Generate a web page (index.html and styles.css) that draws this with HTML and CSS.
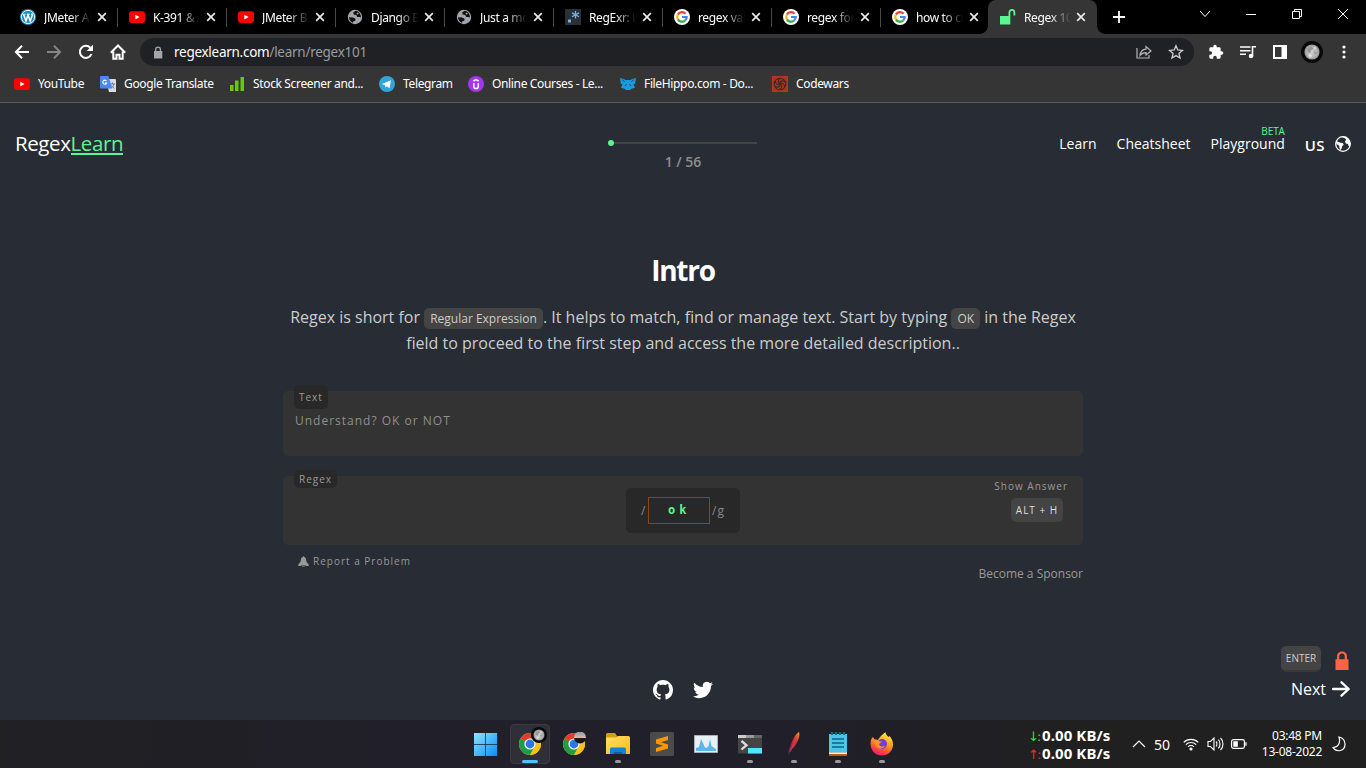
FILE: index.html
```html
<!DOCTYPE html>
<html lang="en">
<head>
<meta charset="utf-8">
<title>Regex 101 - RegexLearn</title>
<link rel="stylesheet" href="styles.css">
</head>
<body>
<svg class="defs" width="0" height="0" aria-hidden="true">
  <defs>
    <linearGradient id="win" x1="0" y1="0" x2="1" y2="1"><stop offset="0" stop-color="#8be6ff"/><stop offset="1" stop-color="#0a8cf5"/></linearGradient>
    <linearGradient id="folder" x1="0" y1="0" x2="1" y2="1"><stop offset="0" stop-color="#ffdf68"/><stop offset="1" stop-color="#fbbb17"/></linearGradient>
    <linearGradient id="feather" x1="0" y1="1" x2="1" y2="0"><stop offset="0" stop-color="#5a2a80"/><stop offset=".35" stop-color="#b5224e"/><stop offset=".65" stop-color="#d8303a"/><stop offset="1" stop-color="#f79a22"/></linearGradient>
    <linearGradient id="fox" x1=".7" y1="0" x2=".3" y2="1"><stop offset="0" stop-color="#fff04a"/><stop offset=".45" stop-color="#ff9a1c"/><stop offset=".8" stop-color="#ff3b45"/><stop offset="1" stop-color="#e51a7d"/></linearGradient>
    <linearGradient id="sky" x1="0" y1="0" x2="0" y2="1"><stop offset="0" stop-color="#8598aa"/><stop offset=".5" stop-color="#e0b6aa"/><stop offset=".56" stop-color="#1c1c22"/><stop offset="1" stop-color="#111"/></linearGradient>
    <radialGradient id="moon"><stop offset="0" stop-color="#d0d0ce"/><stop offset=".7" stop-color="#b5b5b3"/><stop offset="1" stop-color="#909090"/></radialGradient>
    <symbol id="x" viewBox="0 0 10 10"><path d="M1.2 1.2l7.6 7.6M8.8 1.2L1.2 8.8" stroke="#e8eaed" stroke-width="1.7"/></symbol>
    <symbol id="yt" viewBox="0 0 16 16"><rect x="0" y="2.3" width="16" height="11.6" rx="2.8" fill="#f00"/><path d="M6.3 5.7v4.8l4.3-2.4z" fill="#fff"/></symbol>
    <symbol id="globe" viewBox="0 0 16 16"><circle cx="8" cy="8" r="7.2" fill="#a3a7ac"/><path d="M8.8 1.8L6.3 3.3 6.6 5.4 9.2 6.1 10.3 8 12.7 7.9 14 8.4C13.9 5 12 2.300 8.8 1.800zM2 8.2l4.300.3 2.4 1.4-.5 1.9-2.2.6.2 1.500C3.700 13 2.200 11 2 8.2z" fill="#111"/><path d="M10.300 3.4l1.6 1-1 1.200-1.500-.7z" fill="#a3a7ac"/></symbol>
    <symbol id="google" viewBox="0 0 16 16"><circle cx="8" cy="8" r="8" fill="#fff"/><g fill="none" stroke-width="2.2"><path d="M11.5 4.7A4.7 4.7 0 0 0 3.9 5.6" stroke="#ea4335"/><path d="M3.9 5.6a4.7 4.7 0 0 0 0 4.8" stroke="#fbbc05"/><path d="M3.9 10.4a4.7 4.7 0 0 0 7.2 1.1" stroke="#34a853"/><path d="M11.1 11.5A4.7 4.7 0 0 0 12.7 8H8" stroke="#4285f4"/></g></symbol>
    <symbol id="chrome" viewBox="0 0 24 24"><circle cx="12" cy="12" r="11" fill="#fbc116"/><path d="M12 12L2.5 6.5A11 11 0 0 1 21.5 6.5H12z" fill="#e33b2e"/><path d="M2.5 6.5A11 11 0 0 0 12 23l4.8-8.3L12 12z" fill="#219a4a"/><path d="M12 7l9.5-.5A11 11 0 0 1 12 23l5-9z" fill="#fbc116"/><circle cx="12" cy="12" r="5.6" fill="#fff"/><circle cx="12" cy="12" r="4.4" fill="#2d76e8"/></symbol>
    <symbol id="moonpic" viewBox="0 0 24 24"><circle cx="12" cy="12" r="12" fill="#08090a"/><circle cx="12" cy="12" r="8.300" fill="url(#moon)"/><path d="M7 8l4-2 3 2-3 2-1 3-3-1z" fill="#989898"/><path d="M14 11l4 1-1 3-3-1z" fill="#a2a2a2"/><circle cx="10" cy="16" r="2" fill="#ddd"/><circle cx="15" cy="7.500" r="1.300" fill="#ddd"/></symbol>
  </defs>
</svg>

<div class="screen">
  <header class="browser">
    <div class="tabs">
      <div class="tab"><svg class="fav" viewBox="0 0 16 16"><circle cx="8" cy="8" r="8" fill="#1e8cbe"/><circle cx="8" cy="8" r="6.600" fill="none" stroke="#fff" stroke-width=".9"/><path d="M3.600 5.500l2.400 6.500 2-6 2.200 6 1.900-5.300c.3-.9 0-1.500-.5-2.200" fill="none" stroke="#fff" stroke-width="1.500"/><path d="M2.600 5.300h3M6.800 5.300h3" stroke="#fff" stroke-width=".9"/></svg><span class="title">JMeter API</span><svg class="close"><use href="#x"/></svg></div>
      <div class="tab"><svg class="fav"><use href="#yt"/></svg><span class="title">K-391 &amp; Al</span><svg class="close"><use href="#x"/></svg></div>
      <div class="tab"><svg class="fav"><use href="#yt"/></svg><span class="title">JMeter Be</span><svg class="close"><use href="#x"/></svg></div>
      <div class="tab"><svg class="fav"><use href="#globe"/></svg><span class="title">Django Ex</span><svg class="close"><use href="#x"/></svg></div>
      <div class="tab"><svg class="fav"><use href="#globe"/></svg><span class="title">Just a mom</span><svg class="close"><use href="#x"/></svg></div>
      <div class="tab"><svg class="fav" viewBox="0 0 16 16"><path d="M0 0h16v16H0z" fill="#2b3036"/><path d="M3 10.500h3v3H3z" fill="#6fb1e8"/><path d="M10.500 2v7.600M7 3.900l7 3.800M14 3.900L7 7.700" stroke="#6fb1e8" stroke-width="1.300"/></svg><span class="title">RegExr: Le</span><svg class="close"><use href="#x"/></svg></div>
      <div class="tab"><svg class="fav"><use href="#google"/></svg><span class="title">regex valid</span><svg class="close"><use href="#x"/></svg></div>
      <div class="tab"><svg class="fav"><use href="#google"/></svg><span class="title">regex for e</span><svg class="close"><use href="#x"/></svg></div>
      <div class="tab last"><svg class="fav"><use href="#google"/></svg><span class="title">how to cr</span><svg class="close"><use href="#x"/></svg></div>
      <div class="tab active"><svg class="fav" viewBox="0 0 16 16"><path d="M0 7h8.500V4.500C8.500 1.500 9.500 0 12 0s3.300 1.500 3.300 4v2.500h-1.800V4c0-1.500-.4-2.200-1.500-2.200S10.300 2.500 10.300 4.500V7v8.500H0z" fill="#5cf593"/></svg><span class="title">Regex 101</span><svg class="close"><use href="#x"/></svg></div>
      <svg class="plus" viewBox="0 0 12 12"><path d="M6 0v12M0 6h12" stroke="#fff" stroke-width="1.800"/></svg>
      <div class="window">
        <svg width="12" height="12" viewBox="0 0 12 12"><path d="M1 3l5 5.500L11 3"/></svg>
        <svg width="12" height="12" viewBox="0 0 12 12"><path d="M1 6.500h10"/></svg>
        <svg width="12" height="12" viewBox="0 0 12 12"><path d="M1.500 3.500h7v7h-7zM3.500 3.500v-2h7v7h-2"/></svg>
        <svg width="12" height="12" viewBox="0 0 12 12"><path d="M1 1l10 10M11 1L1 11"/></svg>
      </div>
    </div>
    <div class="toolbar">
      <div class="navbtns">
        <svg viewBox="0 0 16 16"><path d="M15 8H2M8 1.700L1.900 8 8 14.300" fill="none" stroke="#fff" stroke-width="2"/></svg>
        <svg viewBox="0 0 16 16"><path d="M1 8h13M8 1.700L14.100 8 8 14.300" fill="none" stroke="#858585" stroke-width="2"/></svg>
        <svg viewBox="0 0 16 16"><path d="M13.500 10A6 6 0 1 1 12.300 3.800" fill="none" stroke="#fff" stroke-width="2"/><path d="M15 .8v6.300H8.700z" fill="#fff"/></svg>
        <svg viewBox="0 0 16 16"><path d="M3.300 7.500v7.200h3.200v-4h3v4h3.200V7.500M.8 8.700L8 1.500l7.200 7.200" fill="none" stroke="#fff" stroke-width="2"/></svg>
      </div>
      <div class="omnibox">
        <svg class="lock" viewBox="0 0 10 13"><path d="M1 5h8.300v7.500H1z" fill="#a3a7ab"/><path d="M2.700 5V3.500a2.300 2.300 0 0 1 4.700 0V5" fill="none" stroke="#a3a7ab" stroke-width="1.300"/></svg>
        <span class="url">regexlearn.com<span>/learn/regex101</span></span>
        <svg class="act" viewBox="0 0 16 16"><path d="M1 4v10h12v-3" fill="none" stroke="#b5b5b5" stroke-width="1.200"/><path d="M4 11.500c.4-4 2.400-6 6-6.300V2.500L15 7l-5 4V8.700C7.500 8.700 5.500 9.500 4 11.500z" fill="none" stroke="#b5b5b5" stroke-width="1.200"/></svg>
        <svg class="act" viewBox="0 0 16 16"><path d="M8 1.700l1.800 4.300 4.700.4-3.600 3 1.100 4.600L8 11.600 4 14l1.100-4.600-3.600-3 4.700-.4z" fill="none" stroke="#d0d0d0" stroke-width="1.300"/></svg>
      </div>
      <div class="exts">
        <svg viewBox="0 0 24 24"><path fill="#fff" d="M20.500 11H19V7a2 2 0 0 0-2-2h-4V3.500a2.500 2.500 0 0 0-5 0V5H4a2 2 0 0 0-2 2v3.800h1.500a2.700 2.700 0 0 1 0 5.400H2V20a2 2 0 0 0 2 2h3.800v-1.500a2.700 2.700 0 0 1 5.400 0V22H17a2 2 0 0 0 2-2v-4h1.500a2.500 2.500 0 0 0 0-5z"/></svg>
        <svg viewBox="0 0 16 16"><path d="M0 3h10.500M0 6.700h10.500M0 10.300h6M12.500 12.500V2.800H16" fill="none" stroke="#fff" stroke-width="1.600"/><circle cx="11" cy="12" r="2.200" fill="#fff"/></svg>
        <svg viewBox="0 0 16 16"><path d="M2 2h12v12H2z" fill="none" stroke="#fff" stroke-width="2"/><path d="M9.500 2H14v12H9.500z" fill="#fff"/></svg>
        <svg class="avatar"><use href="#moonpic"/></svg>
        <svg viewBox="0 0 16 16" fill="#fff"><circle cx="8" cy="3" r="1.600"/><circle cx="8" cy="8" r="1.600"/><circle cx="8" cy="13" r="1.600"/></svg>
      </div>
    </div>
    <div class="bookmarks">
      <div class="bm b1"><svg><use href="#yt"/></svg><span>YouTube</span></div>
      <div class="bm b2"><svg viewBox="0 0 16 16"><path d="M6 3h9a1 1 0 0 1 1 1v12H9z" fill="#dadce0"/><path d="M10 8h5M12.500 6.500V8M14 8c-.4 2-1.500 3.300-3 4M11.300 9.500l3 3" stroke="#5f7d9f" fill="none"/><path d="M1 0h7.500l3.700 12.500H1a1 1 0 0 1-1-1V1a1 1 0 0 1 1-1z" fill="#4b87ee"/><path d="M6.500 5A2 2 0 1 0 6.700 7H5" fill="none" stroke="#fff" stroke-width="1.100"/></svg><span>Google Translate</span></div>
      <div class="bm b3"><svg viewBox="0 0 16 16"><path d="M1 9h3.500v6H1zM6 4.500h3.500V15H6zM11.500 1H15v14h-3.500z" fill="#63cb0b"/></svg><span>Stock Screener and...</span></div>
      <div class="bm b4"><svg viewBox="0 0 16 16"><circle cx="8" cy="8" r="8" fill="#32a5dd"/><path d="M2.900 8L12 4.200l-1.500 8.100-2.700-2-1.400 1.500-.5-3 4-2.800-4.700 2.900z" fill="#fff"/></svg><span>Telegram</span></div>
      <div class="bm b5"><svg viewBox="0 0 16 16"><circle cx="8" cy="8" r="8" fill="#a435f0"/><path d="M5.800 7v3.200c0 3.200 4.500 3.200 4.500 0V7M5.400 5L8 3.500 10.700 5" fill="none" stroke="#fff" stroke-width="1.500"/></svg><span>Online Courses - Le...</span></div>
      <div class="bm b6"><svg viewBox="0 0 16 16"><path d="M0 2l4 1 1.500 1h5L12 3l4-1-.8 5.500-1.700 1 1.500 3.200-3.500 1L10 14H6l-1.500-1.300-3.500-1L2.500 8.500l-1.700-1z" fill="#159ce1"/><path d="M2 3.500l2.700 2.200M14 3.500l-2.700 2.200M4.800 9.500l2-1M11.200 9.500l-2-1" stroke="#30485b"/></svg><span>FileHippo.com - Do...</span></div>
      <div class="bm b7"><svg viewBox="0 0 16 16"><path d="M0 0h16v16H0z" fill="#b1361e"/><g fill="none" stroke="#3b2926" stroke-width="1.100"><circle cx="8" cy="8" r="5.800"/><path d="M8 8c-3-1-2-4 0-5M8 8c-1-3 3-4 5-2M8 8c2-2 5 0 4.500 3M8 8c3 1 2 4 0 5M8 8c1 3-3 4-5 2M8 8c-2 2-5 0-4.500-3"/></g></svg><span>Codewars</span></div>
    </div>
  </header>

  <main class="page">
    <nav class="nav">
      <div class="logo">Regex<span>Learn</span></div>
      <div class="progress"><div class="track"><i></i></div><div class="count">1 / 56</div></div>
      <div class="links">
        <a>Learn</a><a class="cheat">Cheatsheet</a><a class="play">Playground<sup>BETA</sup></a>
        <span class="lang">US</span>
        <svg width="16" height="16" viewBox="0 0 16 16"><circle cx="8" cy="8" r="7.300" fill="#282c34" stroke="#fff" stroke-width="1.300"/><path d="M1.200 5.200L3 5.700l2.300 1 2.400.2 1 1.700-1.500 1.700-.6 2.200-1.200 1.700-1-2.500-.2-2L1.500 8zM6.500.8l3.800-.1c2.500.9 4.200 2.800 4.900 5.300l-.3 4.200-1.300-.2-.7-2-2-.5-1-2 1.300-1.700-1-1.400z" fill="#fff"/></svg>
      </div>
    </nav>

    <section class="lesson">
      <h1>Intro</h1>
      <p>Regex is short for <code class="re">Regular Expression</code>. It helps to match, find or manage text. Start by typing <code>OK</code> in the Regex<br>field to proceed to the first step and access the more detailed description..</p>
      <div class="box textbox"><span class="label">Text</span><div class="content">Understand? OK or NOT</div></div>
      <div class="box regexbox">
        <span class="label">Regex</span>
        <div class="field"><span class="slash">/</span><span class="input">ok</span><span class="flag">/g</span></div>
        <div class="answer"><span>Show Answer</span><kbd>ALT + H</kbd></div>
      </div>
      <div class="below">
        <span class="report"><svg width="11" height="11" viewBox="0 0 11 11"><path d="M5.500 0l.8 1c1.300.6 1.800 1.700 1.900 3.300.1 1.700 1 2.700 2.300 3.700v1H.5V8c1.300-1 2.200-2 2.300-3.700C2.900 2.700 3.400 1.600 4.700 1z" fill="#999"/><path d="M.3 9.500h3.200M7.500 9.500h3.200M4 10h3" stroke="#999" stroke-width="1.100"/></svg>Report a Problem</span>
        <span class="sponsor">Become a Sponsor</span>
      </div>
    </section>

    <footer class="foot">
      <div></div>
      <div class="social">
        <svg width="20" height="20" viewBox="0 0 16 16" fill="#fff"><path d="M8 0C3.580 0 0 3.580 0 8c0 3.540 2.290 6.530 5.470 7.590.4.070.55-.17.55-.38 0-.19-.01-.82-.01-1.490-2.010.37-2.530-.49-2.690-.94-.09-.23-.48-.94-.82-1.130-.28-.15-.68-.52-.01-.53.63-.01 1.080.58 1.230.82.72 1.210 1.870.87 2.330.66.070-.52.28-.87.51-1.070-1.780-.2-3.640-.89-3.640-3.950 0-.87.31-1.590.82-2.150-.08-.2-.36-1.020.08-2.120 0 0 .67-.21 2.200.82.64-.18 1.320-.27 2-.27s1.360.09 2 .27c1.530-1.040 2.200-.82 2.200-.82.44 1.100.16 1.920.08 2.120.51.56.82 1.270.82 2.150 0 3.070-1.870 3.750-3.650 3.950.29.25.54.73.54 1.480 0 1.070-.01 1.930-.01 2.200 0 .21.15.46.55.38A8.010 8.010 0 0 0 16 8c0-4.420-3.580-8-8-8z"/></svg>
        <svg width="20" height="20" viewBox="0 0 24 24" fill="#fff"><path d="M23.953 4.570a10 10 0 01-2.825.775 4.958 4.958 0 002.163-2.723c-.951.555-2.005.959-3.127 1.184a4.920 4.920 0 00-8.384 4.482C7.690 8.095 4.067 6.130 1.640 3.162a4.822 4.822 0 00-.666 2.475c0 1.710.870 3.213 2.188 4.096a4.904 4.904 0 01-2.228-.616v.060a4.923 4.923 0 003.946 4.827 4.996 4.996 0 01-2.212.085 4.936 4.936 0 004.604 3.417 9.867 9.867 0 01-6.102 2.105c-.39 0-.779-.023-1.170-.067a13.995 13.995 0 007.557 2.209c9.053 0 13.998-7.496 13.998-13.985 0-.21 0-.42-.015-.63A9.935 9.935 0 0024 4.590z"/></svg>
      </div>
      <div class="next">
        <div class="keyrow"><kbd>ENTER</kbd><svg width="14" height="20" viewBox="0 0 14 20"><path d="M.5 8.300H2V5.500c0-6.600 10-6.600 10 0v2.800h1.500V19H.5z" fill="#ff6347"/><path d="M4.300 8.300V5.700c0-4.200 5.400-4.200 5.400 0v2.600z" fill="#282c34"/></svg></div>
        <div class="nextrow">Next<svg width="18" height="16" viewBox="0 0 18 16"><path d="M1 8h15.500M9.500 1.300L16.700 8l-7.200 6.700" fill="none" stroke="#fff" stroke-width="2.300" stroke-linecap="round" stroke-linejoin="round"/></svg></div>
      </div>
    </footer>
  </main>

  <div class="taskbar">
    <div class="apps">
      <div class="app"><svg viewBox="0 0 24 24"><path d="M0 1h11.200v11.200H0zM11.900 1h11.200v11.200H11.900zM0 12.900h11.200V24H0zM11.900 12.900h11.200V24H11.900z" fill="url(#win)"/></svg></div>
      <div class="app on"><svg viewBox="0 0 24 24"><use href="#chrome" width="24" height="24"/></svg><svg class="badge"><use href="#moonpic"/></svg></div>
      <div class="app"><svg viewBox="0 0 24 24"><use href="#chrome" width="24" height="24"/><circle cx="18" cy="5.500" r="6" fill="url(#sky)"/></svg></div>
      <div class="app run"><svg viewBox="0 0 24 24"><path d="M0 2.500A1.500 1.500 0 0 1 1.500 1H9l2 3v3H0z" fill="#d99b0d"/><path d="M0 5.500h10L12 4h10.500A1.500 1.500 0 0 1 24 5.500V22H0z" fill="url(#folder)"/><path d="M4 22v-5a1.500 1.500 0 0 1 1.500-1.500h13A1.500 1.500 0 0 1 20 17v5z" fill="#1183d7"/><path d="M8 22v-2h8v2z" fill="#0a5ea8"/></svg></div>
      <div class="app"><svg viewBox="0 0 24 24"><rect width="24" height="24" rx="1.500" fill="#4b4b49"/><path d="M6 7.500l12-3.600v4.200l-7.200 2.200L18 12.500v4L6 20v-4l7.200-2.300L6 11.500z" fill="#ff9800"/></svg></div>
      <div class="app"><svg viewBox="0 0 24 24"><path d="M.5 3.500h23v17H.5z" fill="#e8f0f6" stroke="#a9b2ba"/><path d="M2 19v-3l3-1 2-8 2.500 5 1 3 2 1 2-2 1.500-7 1.500 7 4.500 3v2z" fill="#59b7ee"/></svg></div>
      <div class="app run"><svg viewBox="0 0 24 24"><path d="M0 3h24v18.500H0z" fill="#454545"/><path d="M0 3h8v3H0z" fill="#ccc"/><path d="M8 3h8v3H8z" fill="#999"/><path d="M16 3h8v3h-8z" fill="#666"/><path d="M3.500 9l5 4.200-5 4.300" fill="none" stroke="#ddd" stroke-width="2.300"/><path d="M10 16h14v5.500H10z" fill="#50e6ff"/></svg></div>
      <div class="app run"><svg viewBox="0 0 24 24"><path d="M6.500 23c-.3-3 .5-6 2-9C10.500 8 13 2 17 0c1.500 4-1.500 10-4 14-1.500 2.500-3.500 3-5 5z" fill="url(#feather)"/><path d="M8 20L14.500 6" stroke="#eb4930" stroke-width=".7"/></svg></div>
      <div class="app run"><svg viewBox="0 0 24 24"><path d="M3 20h18v4H3z" fill="#b85c16"/><path d="M3 2h18v18.500H3z" fill="#4dc4e8"/><path d="M3 20.500h18V22H3z" fill="#f2f2f2"/><path d="M6 7h12M6 11h12M6 15h12" stroke="#0b6683" stroke-width="1.600"/><path d="M6 0v3M10 0v3M14 0v3M18 0v3" stroke="#126d8b" stroke-width="2"/></svg></div>
      <div class="app run"><svg viewBox="0 0 24 24"><path d="M.5 11c.3-3 1-5 2.500-6l1.500 2.500L8 8C11 3 13.500 2 15.500 0c0 2 1 3 3 5l1-1c2 2 3.500 5 3.500 8.500C23 19 18 23.500 11.800 23.500S.5 19 .5 11z" fill="url(#fox)"/><circle cx="12" cy="12" r="5" fill="#6d3fe0"/><path d="M3 8.500c3-2 5-1 6 .5l3 .8L9 12c1 2.700 4 3.200 6 1.700-1 3-6 4-8.500 1z" fill="#ff9224"/></svg></div>
    </div>
    <div class="tray">
      <div class="net"><div><b class="down">↓:</b> 0.00 KB/s</div><div><b class="up">↑:</b> 0.00 KB/s</div></div>
      <svg class="chev" width="14" height="10" viewBox="0 0 14 10"><path d="M1 8l6-6 6 6" fill="none" stroke="#fff" stroke-width="1.200"/></svg>
      <span class="fifty">50</span>
      <svg class="wifi" width="16" height="14" viewBox="0 0 16 14" fill="none" stroke="#fff" stroke-width="1.200"><path d="M.7 5.400a10.300 10.300 0 0 1 14.600 0M2.800 7.700a7.300 7.300 0 0 1 10.400 0M5 9.900a4.300 4.300 0 0 1 6 0"/><circle cx="8" cy="12" r="1" fill="#fff"/></svg>
      <svg class="vol" width="17" height="14" viewBox="0 0 17 14" fill="none" stroke="#fff" stroke-width="1.100"><path d="M1 4.500h2.500L7 1v12L3.500 9.500H1zM9 4.500c1.300 1.300 1.300 3.700 0 5M11.300 2.700c2.300 2.300 2.300 6.300 0 8.600M13.500 1c3.300 3 3.300 9 0 12"/></svg>
      <svg class="bat" width="16" height="10" viewBox="0 0 16 10"><rect x=".6" y=".6" width="12.800" height="8.800" rx="1.800" fill="none" stroke="#fff" stroke-width="1.200"/><path d="M2.300 2.300h4.500v5.400H2.300zM14.300 3.300h1.300v3.400h-1.300z" fill="#fff"/></svg>
      <div class="clock"><div>03:48 PM</div><div>13-08-2022</div></div>
      <svg class="dnd" width="14" height="16" viewBox="0 0 14 16"><path d="M7 1c4 1 6 4 6 7.200C13 15 4.500 17 1 11.500 6 11.500 8.800 7 7 1z" fill="none" stroke="#fff" stroke-width="1.200"/></svg>
    </div>
  </div>
</div>
</body>
</html>
```
FILE: styles.css
```css
* { box-sizing: border-box; }
body { margin: 0; background: #282c34; font-family: "Open Sans", "Noto Sans", sans-serif; color: #fff; }
svg { display: block; flex: none; }
.defs { position: absolute; }
.screen { width: 1366px; height: 768px; overflow: hidden; display: flex; flex-direction: column; }

/* browser chrome */
.browser { height: 103px; background: #353535; border-bottom: 1px solid #5b5b5b; flex: none; font-family: "Noto Sans", sans-serif; font-size: 12px; }
.tabs { height: 34px; background: #000; display: flex; padding-left: 8px; }
.tab { width: 109px; height: 34px; display: flex; align-items: center; padding-left: 12px; position: relative; }
.tab::after { content: ""; position: absolute; right: -1px; top: 8px; width: 1px; height: 19px; background: #4a4a4a; }
.tab.last::after { display: none; }
.fav { width: 16px; height: 16px; }
.title { width: 47px; margin-left: 8px; overflow: hidden; white-space: nowrap; letter-spacing: -0.35px; -webkit-mask-image: linear-gradient(90deg, #000 26px, transparent 47px); mask-image: linear-gradient(90deg, #000 26px, transparent 47px); }
.close { width: 10px; height: 10px; margin-left: 6px; }
.tab.active { background: #353535; border-radius: 8px 8px 0 0; margin-left: -1px; }
.tab.active .close { margin-left: 5px; }
.tab.active::before { content: ""; position: absolute; left: -8px; bottom: 0; width: 8px; height: 8px; background: radial-gradient(circle at 0 0, #000 7.5px, #353535 8px); }
.tab.active::after { right: -8px; top: auto; bottom: 0; width: 8px; height: 8px; background: radial-gradient(circle at 100% 0, #000 7.5px, #353535 8px); }
.plus { width: 12px; height: 12px; margin: 11px 0 0 16px; }
.window { margin: 8px 17px 0 auto; display: flex; gap: 34px; fill: none; stroke: #fff; stroke-width: 1; }
.toolbar { height: 36px; display: flex; align-items: center; padding-left: 14px; }
.navbtns { display: flex; gap: 16px; }
.navbtns svg { width: 16px; height: 16px; }
.omnibox { width: 1054px; height: 28px; margin-left: 14px; border-radius: 14px; background: #202124; display: flex; align-items: center; padding: 0 10px 0 13px; }
.lock { width: 10px; height: 13px; }
.url { margin: 0 auto 1px 11px; font-size: 13.5px; letter-spacing: -0.27px; }
.url span { color: #999da1; }
.act { width: 16px; height: 16px; margin-left: 16px; }
.exts { display: flex; align-items: center; gap: 16px; padding-left: 14px; }
.exts svg { width: 16px; height: 16px; }
.exts .avatar { width: 22px; height: 22px; margin: 0 -3px; }
.bookmarks { height: 32px; display: flex; align-items: center; padding: 0 0 4px 14px; }
.bm { display: flex; align-items: center; gap: 8px; white-space: nowrap; letter-spacing: -0.35px; }
.bm span { padding-bottom: 2px; }
.bm svg { width: 16px; height: 16px; }
.b1 { width: 86px; } .b2 { width: 129px; } .b3 { width: 150px; } .b4 { width: 89px; } .b5 { width: 152px; } .b6 { width: 152px; }

/* page */
.page { height: 617px; background: #282c34; flex: none; display: flex; flex-direction: column; }
.nav { height: 137px; display: grid; grid-template-columns: 1fr 150px 1fr; padding: 0 15px; }
.logo { margin-top: 26px; font-size: 20.5px; line-height: 28px; letter-spacing: -0.4px; }
.logo span { color: #5cf593; display: inline-block; height: 26px; border-bottom: 2px solid #5cf593; }
.progress { padding: 39px 0 0; }
.track { height: 2px; background: #444; margin: 0 1px 0 3px; position: relative; }
.track i { position: absolute; left: -3px; top: -2px; width: 6px; height: 6px; border-radius: 50%; background: #5cf593; }
.count { text-align: center; font-size: 14px; line-height: 20px; font-weight: 600; color: #8d8d8d; margin-top: 8px; }
.links { display: flex; justify-content: flex-end; padding-top: 31px; font-size: 14px; line-height: 20px; }
.links a { margin-right: 20px; position: relative; }
.links sup { position: absolute; right: 0; top: -8px; font-size: 10px; line-height: 10px; color: #5cf593; letter-spacing: -0.1px; }
.lang { font-weight: 600; font-size: 15px; line-height: 22px; margin-right: 10px; letter-spacing: 0.4px; }
.links svg { margin-top: 2px; }

.lesson { width: 800px; margin: 0 auto; height: 346px; }
h1 { margin: 10px 0 0; text-align: center; font-size: 28px; line-height: 40px; letter-spacing: -1.3px; }
p { margin: 14px 0 0; font-size: 16px; line-height: 26px; text-align: center; color: #ccc; white-space: nowrap; }
code { font-family: inherit; font-size: 12px; background: #444; padding: 2px 6px; border-radius: 5px; line-height: 17px; }
.box { background: #333; border-radius: 5px; position: relative; }
.label { position: absolute; left: 11px; background: #282828; border-radius: 5px; font-size: 10px; letter-spacing: 1px; color: #999; padding: 0 5px; }
.textbox { margin-top: 35px; height: 65px; }
.textbox .label { top: -6px; line-height: 24px; }
.content { padding: 20px 12px; font-size: 12px; line-height: 20px; letter-spacing: 1px; color: #8f8f8f; }
.regexbox { margin-top: 20px; height: 69px; display: grid; grid-template-columns: 1fr 114px 1fr; }
.regexbox .label { top: -6px; line-height: 18px; }
.field { grid-column: 2; margin-top: 12px; height: 45px; background: #282828; border-radius: 5px; display: flex; align-items: center; padding-left: 15px; font-size: 12px; color: #888; }
.slash { width: 7px; }
.input { width: 62px; height: 27px; border: 1px solid #8b4513; color: #5cf593; font: bold 12px/25px "DejaVu Sans Mono", monospace; letter-spacing: 4px; padding-left: 19px; }
.flag { margin-left: 2px; letter-spacing: 1px; }
.answer { display: flex; flex-direction: column; align-items: flex-end; padding: 0 15px 0 0; font-size: 10px; letter-spacing: 1px; color: #999; }
.answer span { line-height: 20px; margin-bottom: 2px; }
kbd { font-family: inherit; background: #444; color: #ddd; border-radius: 5px; font-size: 10px; text-align: center; }
.answer kbd { width: 52px; height: 24px; line-height: 24px; margin-right: 5px; }
.below { display: flex; justify-content: space-between; padding-left: 15px; color: #999; }
.report { display: flex; gap: 4px; font-size: 10px; line-height: 14px; letter-spacing: 1px; padding-top: 9px; }
.report svg { margin-top: 2px; }
.sponsor { font-size: 12px; line-height: 18px; padding-top: 20px; }

.foot { height: 134px; display: grid; grid-template-columns: 1fr 60px 1fr; }
.social { display: flex; gap: 20px; padding-top: 94px; }
.next { display: flex; flex-direction: column; align-items: flex-end; padding: 60px 16px 0 0; }
.keyrow { display: flex; align-items: center; gap: 14px; height: 26px; margin-right: 1px; }
.keyrow kbd { width: 40px; height: 26px; line-height: 24px; border-bottom: 2px solid #383838; color: #ccc; }
.keyrow svg { margin-top: 3px; }
.nextrow { display: flex; align-items: center; gap: 6px; font-size: 16px; line-height: 22px; margin-top: 6px; }

/* taskbar */
.taskbar { height: 48px; background: linear-gradient(90deg, #212023, #211f2a 35%, #211f2a 55%, #202020 80%); flex: none; display: flex; padding-left: 466px; }
.apps { display: flex; gap: 4px; padding-top: 4px; }
.app { width: 40px; height: 40px; display: flex; align-items: center; justify-content: center; position: relative; border-radius: 4px; }
.app > svg { width: 24px; height: 24px; }
.app.on { background: #302f38; border: 1px solid #3c3b43; }
.app.on::after, .app.run::after { content: ""; position: absolute; bottom: 1px; width: 6px; height: 3px; border-radius: 2px; background: #9b9b9f; }
.app.on::after { bottom: 0; width: 16px; background: #4cc2ff; }
.app > .badge { position: absolute; width: 16px; height: 16px; left: 20px; top: 2px; }
.tray { display: flex; align-items: center; margin-left: auto; font-family: "Noto Sans", sans-serif; padding-right: 20px; }
.net { font-weight: 700; font-size: 15px; line-height: 16px; width: 84px; white-space: nowrap; padding-top: 1px; letter-spacing: 0.1px; }
.net b { display: inline-block; width: 10px; font-family: "DejaVu Sans", sans-serif; font-size: 13px; font-weight: 400; letter-spacing: -2px; }
.down { color: #26e82e; } .up { color: #f22929; }
.chev { margin-left: 20px; }
.fifty { width: 16px; margin-left: 8px; font-size: 14px; }
.wifi { margin-left: 13px; }
.vol { margin-left: 8px; }
.bat { margin-left: 7px; }
.clock { width: 75px; font-size: 12px; line-height: 16px; text-align: right; white-space: nowrap; letter-spacing: -0.25px; }
.dnd { margin-left: 10px; }
```
